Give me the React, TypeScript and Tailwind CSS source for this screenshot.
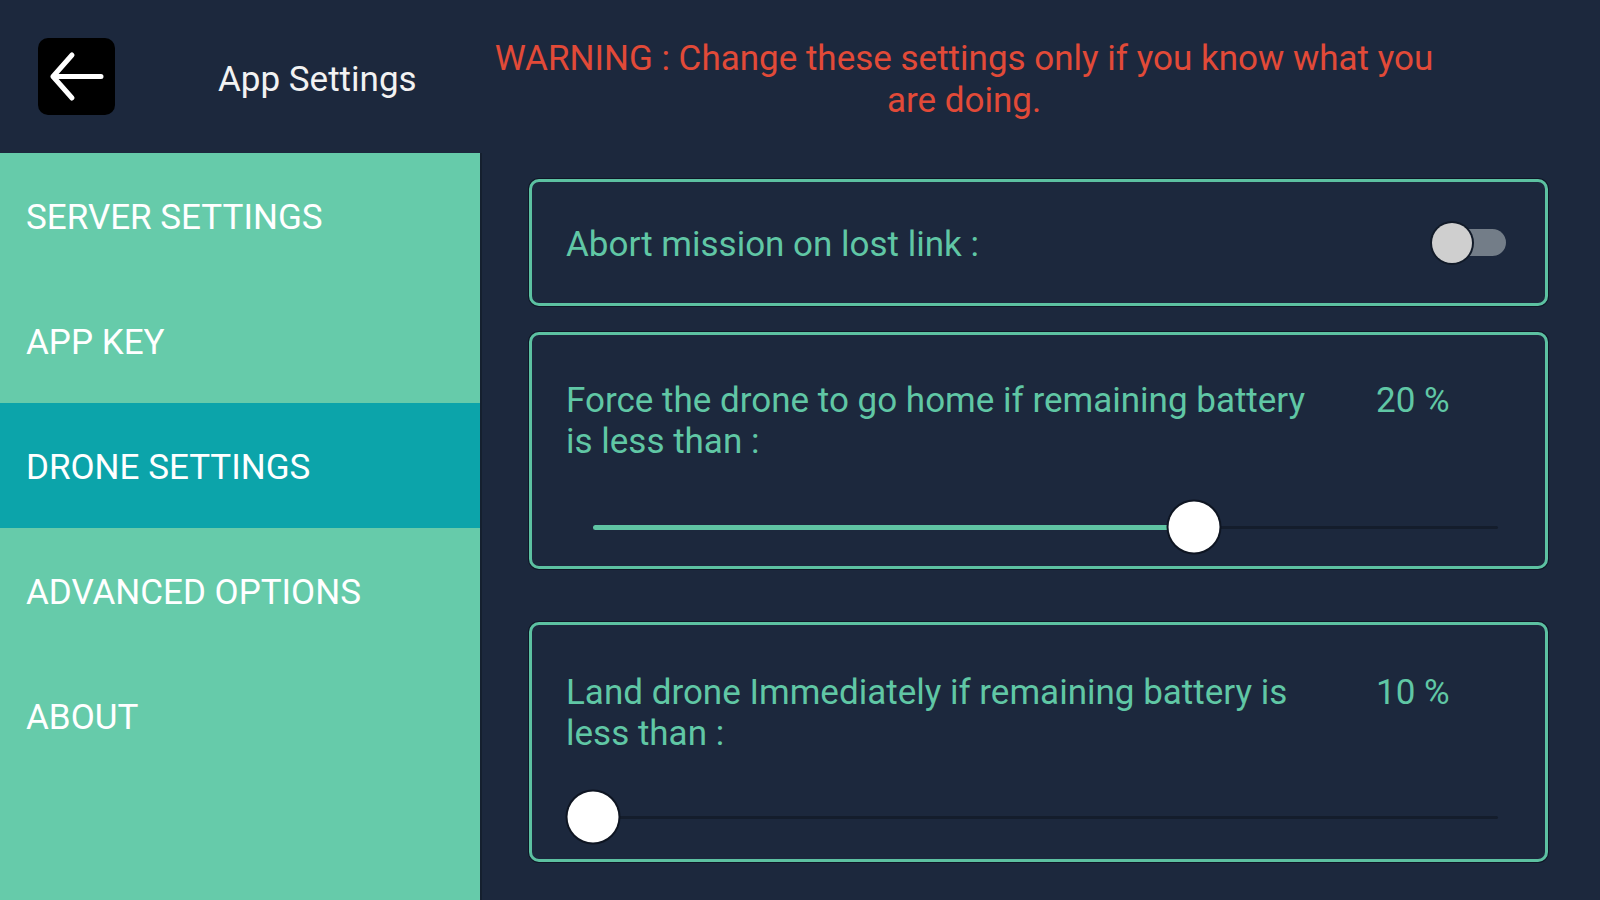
const menu = ["SERVER SETTINGS", "APP KEY", "DRONE SETTINGS", "ADVANCED OPTIONS", "ABOUT"];

function BackArrow() {
  return (
    <svg width="77" height="77" viewBox="0 0 77 77" fill="none">
      <path d="M15 38.5H63M15 38.5L34 17M15 38.5L34 60" stroke="#ffffff" strokeWidth="5" strokeLinecap="round" strokeLinejoin="round" />
    </svg>
  );
}

function Slider({ pos }: { pos: number }) {
  // pos is the thumb position along the track, 0..1
  return (
    <div className="relative h-[52px] w-[955px] px-[25px] flex items-center">
      <div className="relative h-[3px] w-full bg-[#141d2c] rounded-full">
        <div className="absolute left-0 top-[-1px] h-[5px] bg-[#5fc4a3] rounded-full" style={{ width: `${pos * 100}%` }} />
        <div
          className="absolute top-1/2 w-[51px] h-[51px] -translate-x-1/2 -translate-y-1/2 rounded-full bg-white shadow-[0_0_0_2px_#0e1522]"
          style={{ left: `${pos * 100}%` }}
        />
      </div>
    </div>
  );
}

function BatteryCard({ label, value, pos, h, pt, gap }: { label: string; value: string; pos: number; h: string; pt: string; gap: string }) {
  return (
    <div className={`w-[1019px] ${h} ${pt} border-[3px] border-[#5cc1a1] rounded-[10px] shadow-[0_0_0_1px_#0f1726] flex flex-col`}>
      <div className="flex pl-[34px]">
        <div className="w-[755px] text-[35px] leading-[41px] text-[#60c7a5]">{label}</div>
        <div className="ml-[55px] text-[35px] leading-[41px] text-[#60c7a5]">{value}</div>
      </div>
      <div className={`${gap} ml-[36px]`}>
        <Slider pos={pos} />
      </div>
    </div>
  );
}

export default function App() {
  return (
    <div className="w-[1600px] h-[900px] bg-[#1c283d] flex flex-col overflow-hidden font-['Roboto',sans-serif]">
      <header className="h-[153px] flex items-center shrink-0">
        <div className="w-[482px] flex items-center">
          <button className="ml-[38px] w-[77px] h-[77px] bg-black rounded-[10px] flex items-center justify-center">
            <BackArrow />
          </button>
          <h1 className="ml-[103px] mt-[8px] text-[35px] text-[#f2f2f2]">App Settings</h1>
        </div>
        <p className="w-[964px] mt-[7px] text-center text-[35px] leading-[42px] text-[#e24a38]">
          WARNING : Change these settings only if you know what you are doing.
        </p>
      </header>
      <div className="flex flex-1">
        <aside className="w-[482px] bg-[#66cbaa] flex flex-col border-r-2 border-[#15202f]">
          {menu.map((m) => (
            <div
              key={m}
              className={`h-[125px] flex items-center pl-[26px] pt-[6px] text-[35px] text-white ${m === "DRONE SETTINGS" ? "bg-[#0ca4aa]" : ""}`}
            >
              {m}
            </div>
          ))}
        </aside>
        <main className="flex-1 pl-[47px] pt-[26px] flex flex-col">
          <div className="w-[1019px] h-[127px] border-[3px] border-[#5cc1a1] rounded-[10px] shadow-[0_0_0_1px_#0f1726] flex items-center pl-[34px] pr-[39px]">
            <span className="flex-1 mt-[6px] text-[35px] text-[#60c7a5]">Abort mission on lost link :</span>
            <div className="relative w-[74px] h-[40px] flex items-center">
              <div className="ml-[8px] w-[66px] h-[27px] rounded-full bg-[#737d88]" />
              <div className="absolute left-0 top-0 w-[40px] h-[40px] rounded-full bg-[#cfcfcf] shadow-[0_0_0_2px_#111a28]" />
            </div>
          </div>
          <div className="mt-[26px]">
            <BatteryCard
              label="Force the drone to go home if remaining battery is less than :"
              value="20 %"
              pos={0.664}
              h="h-[237px]"
              pt="pt-[45px]"
              gap="mt-[39px]"
            />
          </div>
          <div className="mt-[53px]">
            <BatteryCard
              label="Land drone Immediately if remaining battery is less than :"
              value="10 %"
              pos={0}
              h="h-[240px]"
              pt="pt-[47px]"
              gap="mt-[37px]"
            />
          </div>
        </main>
      </div>
    </div>
  );
}
